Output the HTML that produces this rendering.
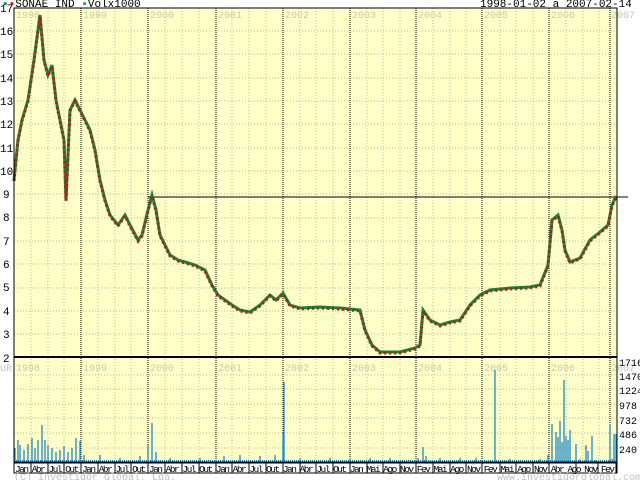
<!DOCTYPE html>
<html><head><style>
body{margin:0;background:#fff;width:640px;height:480px;overflow:hidden;font-family:"Liberation Mono",monospace}
</style></head><body>
<svg width="640" height="480" xmlns="http://www.w3.org/2000/svg" font-family="Liberation Mono, monospace">
<rect x="14" y="8" width="603" height="454" fill="#ffffc8"/>
<g stroke="#b8b8a0" stroke-width="1" stroke-dasharray="1,2">
<path d="M31 8V462M48 8V462M64 8V462M98 8V462M115 8V462M131 8V462M165 8V462M182 8V462M199 8V462M232 8V462M249 8V462M266 8V462M300 8V462M316 8V462M333 8V462M367 8V462M383 8V462M400 8V462M433 8V462M450 8V462M466 8V462M500 8V462M516 8V462M533 8V462M566 8V462M583 8V462M599 8V462"/>
<path d="M14 31H617M14 54H617M14 78H617M14 101H617M14 124H617M14 148H617M14 171H617M14 194H617M14 218H617M14 241H617M14 264H617M14 288H617M14 311H617M14 334H617"/>
<path d="M14 375H617M14 389H617M14 404H617M14 418H617M14 433H617M14 448H617"/>
</g>
<g stroke="#000" stroke-width="1" stroke-dasharray="1,1">
<path d="M81 8V462M148 8V462M216 8V462M283 8V462M350 8V462M416 8V462M482 8V462M549 8V462M610 8V462"/>
</g>
<g font-size="10" fill="#c8c8b0">
<text x="16" y="18">1998</text><text x="83" y="18">1999</text><text x="150" y="18">2000</text><text x="218" y="18">2001</text><text x="285" y="18">2002</text><text x="352" y="18">2003</text><text x="418" y="18">2004</text><text x="484" y="18">2005</text><text x="551" y="18">2006</text><text x="611" y="18">2007</text>
<text x="16" y="371">1998</text><text x="83" y="371">1999</text><text x="150" y="371">2000</text><text x="218" y="371">2001</text><text x="285" y="371">2002</text><text x="352" y="371">2003</text><text x="418" y="371">2004</text><text x="484" y="371">2005</text><text x="551" y="371">2006</text><text x="611" y="371">2007</text>
<text x="0" y="371">UR</text>
</g>
<line x1="148" y1="197" x2="628" y2="197" stroke="#000"/>
<polyline fill="none" stroke="#0a8a3a" stroke-width="3" points="14,180 18,140 22,120 28,100 34,60 38,30 40,15 44,60 48,75 52,65 56,100 60,120 64,140 66,200 70,110 75,100 80,110 85,120 90,130 95,150 100,180 105,200 110,215 118,225 125,215 130,225 138,240 142,235 148,210 152,195 156,210 160,235 165,245 170,255 178,260 185,262 195,265 205,270 212,285 218,295 225,300 232,305 240,310 250,312 260,305 270,295 276,300 283,293 290,305 300,308 320,307 340,308 360,310 365,330 372,345 380,352 400,352 415,348 420,345 423,310 430,320 440,325 450,322 460,320 470,305 480,295 490,290 510,288 530,287 540,285 548,265 552,220 558,215 562,230 565,250 570,262 580,258 590,240 600,232 608,225 612,205 616,196"/>
<polyline fill="none" stroke="#cc1010" stroke-width="3" stroke-dasharray="2,3" points="14,181 18,141 22,121 28,101 34,61 38,31 40,16 44,61 48,76 52,66 56,101 60,121 64,141 66,201 70,111 75,101 80,111 85,121 90,131 95,151 100,181 105,201 110,216 118,226 125,216 130,226 138,241 142,236 148,211 152,196 156,211 160,236 165,246 170,256 178,261 185,263 195,266 205,271 212,286 218,296 225,301 232,306 240,311 250,313 260,306 270,296 276,301 283,294 290,306 300,309 320,308 340,309 360,311 365,331 372,346 380,353 400,353 415,349 420,346 423,311 430,321 440,326 450,323 460,321 470,306 480,296 490,291 510,289 530,288 540,286 548,266 552,221 558,216 562,231 565,251 570,263 580,259 590,241 600,233 608,226 612,206 616,197"/>
<g stroke="#1a8ac8" stroke-width="1.3">
<path d="M15 462V448M18 462V440M20 462V445M24 462V450M28 462V444M32 462V438M35 462V448M38 462V440M42 462V425M45 462V440M48 462V445M52 462V448M56 462V452M60 462V450M64 462V446M68 462V452M72 462V448M76 462V438M80 462V441M84 462V455M100 462V455M120 462V458M140 462V456M148 462V445M152 462V423M156 462V452M170 462V458M200 462V458M224 462V456M240 462V455M260 462V456M275 462V455M283 462V433M284 462V382M300 462V458M330 462V458M350 462V458M370 462V458M390 462V458M418 462V458M423 462V447M426 462V456M440 462V458M460 462V458M476 462V458M495 462V370M510 462V459M540 462V459M548 462V455M552 462V424M556 462V432M558 462V437M560 462V421M562 462V442M564 462V380M566 462V436M568 462V440M570 462V430M576 462V444M580 462V459M586 462V445M588 462V451M592 462V436M596 462V460M610 462V424M612 462V459M614 462V434M616 462V434"/>
<path d="M14 462H617" stroke-width="4" stroke-dasharray="1,1"/>
</g>
<rect x="14" y="8" width="603" height="454" fill="none" stroke="#000"/>
<line x1="14" y1="357" x2="617" y2="357" stroke="#000" stroke-width="2"/>
<g font-size="11" fill="#000">
<text x="0" y="12">17</text><text x="0" y="35">16</text><text x="0" y="58">15</text><text x="0" y="82">14</text><text x="0" y="105">13</text><text x="0" y="128">12</text><text x="0" y="152">11</text><text x="0" y="175">10</text><text x="3" y="198">9</text><text x="3" y="221">8</text><text x="3" y="245">7</text><text x="3" y="268">6</text><text x="3" y="291">5</text><text x="3" y="315">4</text><text x="3" y="338">3</text><text x="3" y="362">2</text>
<text x="619" y="366" font-size="10">1716</text><text x="619" y="380" font-size="10">1470</text><text x="619" y="394" font-size="10">1224</text><text x="619" y="409" font-size="10">978</text><text x="619" y="424" font-size="10">732</text><text x="619" y="438" font-size="10">486</text><text x="619" y="453" font-size="10">240</text>
<text x="2" y="7" font-size="11"><tspan fill="#0a8a3a">▪</tspan><tspan fill="#cc1010">▪</tspan>SONAE IND <tspan fill="#1a8ac8">▪</tspan>Volx1000</text>
<text x="480" y="7" font-size="11">1998-01-02 a 2007-02-14</text>
</g>
<g font-size="10" fill="#000">
<rect x="14" y="463" width="603" height="10" fill="#fff" stroke="#000"/>
<path d="M31 463v10M48 463v10M64 463v10M81 463v10M98 463v10M115 463v10M131 463v10M148 463v10M165 463v10M182 463v10M199 463v10M216 463v10M232 463v10M249 463v10M266 463v10M283 463v10M300 463v10M316 463v10M333 463v10M350 463v10M367 463v10M383 463v10M400 463v10M416 463v10M433 463v10M450 463v10M466 463v10M482 463v10M500 463v10M516 463v10M533 463v10M549 463v10M576 463v10M598 463v10M616 463v10" stroke="#000"/>
<text y="472" textLength="600" x="15" font-size="9.5">Jan Abr Jul Out Jan Abr Jul Out Jan Abr Jul Out Jan Abr Jul Out Jan Abr Jul Out Jan Mai Ago Nov Fev Mai Ago Nov Fev Mai Ago Nov  Abr  Ago Nov Fev</text>
<text x="14" y="480" font-size="10" fill="#c0c0c0">(C) Investidor Global, Lda.</text>
<text x="497" y="480" font-size="10" fill="#c0c0c0">www.investidorglobal.com</text>
</g>
</svg>
</body></html>
